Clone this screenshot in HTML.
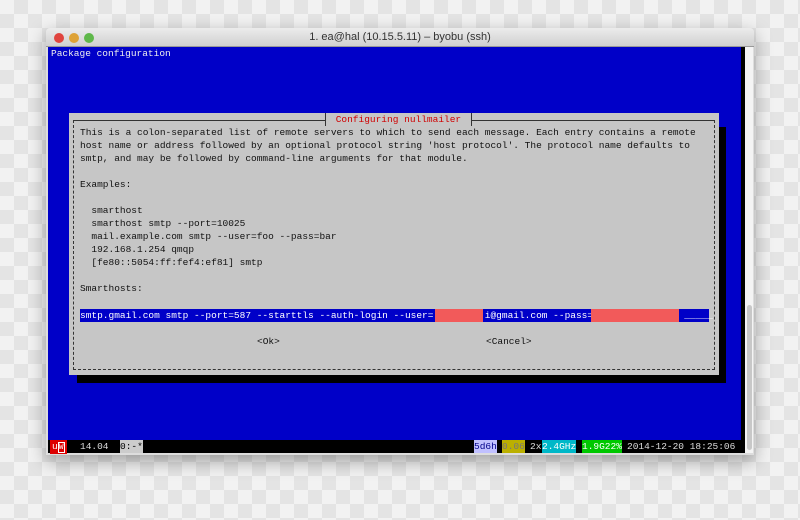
<!DOCTYPE html>
<html><head><meta charset="utf-8"><style>
*{margin:0;padding:0;box-sizing:border-box}
body{width:800px;height:520px;overflow:hidden;position:relative;
background-color:#f2f2f2;
background-image:linear-gradient(45deg,#e4e4e4 25%,transparent 25%,transparent 75%,#e4e4e4 75%),linear-gradient(45deg,#e4e4e4 25%,transparent 25%,transparent 75%,#e4e4e4 75%);
background-size:28px 28px;background-position:0 0,14px 14px;}
.win{position:absolute;left:46px;top:28px;width:708px;height:427px;background:#ddd;box-shadow:0 6px 18px rgba(0,0,0,.35);border-radius:4px 4px 0 0}
.title{position:absolute;left:0;top:0;width:708px;height:19px;background:linear-gradient(#ececec,#d0d0d0);border-radius:4px 4px 0 0;border-bottom:1px solid #999;font:11px "Liberation Sans",sans-serif;color:#333;text-align:center;line-height:19px}
.dot{position:absolute;top:5px;width:10px;height:10px;border-radius:50%}
.term{position:absolute;left:48px;top:47px;width:693px;height:393px;background:#0000c8}
.blk{position:absolute;left:741px;top:47px;width:4px;height:406px;background:#000}
.sb{position:absolute;left:745px;top:47px;width:8px;height:406px;background:#f4f4f4}
.sbt{position:absolute;left:747px;top:305px;width:5px;height:145px;background:#c8c8c8;border-radius:3px}
.status{position:absolute;left:48px;top:440px;width:693px;height:13px;background:#000}
.m{font-family:"Liberation Mono",monospace;font-size:9.5px;white-space:pre;position:absolute;line-height:13px}
.dlg{position:absolute;left:69px;top:113px;width:650px;height:262px;background:#c6c6c6}
.sh{position:absolute;left:77px;top:127px;width:649px;height:256px;background:#000}
.bx{position:absolute;left:73px;top:120px;width:642px;height:250px;border:1px dashed #333;border-top:1px solid #333}
.t{color:#111}
.s{color:#fff}
</style></head><body>
<div class="win">
<div class="title">1. ea@hal (10.15.5.11) – byobu (ssh)</div>
<div class="dot" style="left:8px;background:#e0443e"></div>
<div class="dot" style="left:23px;background:#dea236"></div>
<div class="dot" style="left:38px;background:#5fb84a"></div>
</div>
<div class="term"></div>
<div class="blk"></div><div class="sb"></div><div class="sbt"></div>
<div class="m s" style="left:51px;top:47px;color:#eee">Package configuration</div>
<div class="sh"></div>
<div class="dlg"></div>
<div class="bx"></div>
<div class="m" style="left:325px;top:113px;background:#c6c6c6;color:#d00000;padding:0 4px;border-left:1px solid #333;border-right:1px solid #333"> Configuring nullmailer </div>
<div class="m t" style="left:80px;top:126px">This is a colon-separated list of remote servers to which to send each message. Each entry contains a remote
host name or address followed by an optional protocol string 'host protocol'. The protocol name defaults to
smtp, and may be followed by command-line arguments for that module.

Examples:

  smarthost
  smarthost smtp --port=10025
  mail.example.com smtp --user=foo --pass=bar
  192.168.1.254 qmqp
  [fe80::5054:ff:fef4:ef81] smtp

Smarthosts:</div>
<div style="position:absolute;left:80px;top:309px;width:629px;height:13px;background:#0000c8"></div>
<div class="m s" style="left:80px;top:309px">smtp.gmail.com smtp --port=587 --starttls --auth-login --user=         i@gmail.com --pass=                _____</div>
<div style="position:absolute;left:435px;top:309px;width:48px;height:13px;background:#f25a5a"></div>
<div style="position:absolute;left:591px;top:309px;width:88px;height:13px;background:#f25a5a"></div>
<div class="m t" style="left:257px;top:335px">&lt;Ok&gt;</div>
<div class="m t" style="left:486px;top:335px">&lt;Cancel&gt;</div>
<div class="status"></div>
<div class="m" style="left:50px;top:440px;background:#d00;color:#fff;padding:0 2px">u<span style="border:1px solid #fff;font-size:8px">W</span></div>
<div class="m" style="left:80px;top:440px;color:#ddd">14.04</div>
<div class="m" style="left:120px;top:440px;background:#ccc;color:#000">0:-*</div>
<div class="m" style="left:474px;top:440px;background:#c0c0ff;color:#00008b">5d6h</div>
<div class="m" style="left:502px;top:440px;background:#bbb000;color:#777">0.06</div>
<div class="m" style="left:530px;top:440px;color:#ddd">2x</div>
<div class="m" style="left:542px;top:440px;background:#00b8c8;color:#fff">2.4GHz</div>
<div class="m" style="left:582px;top:440px;background:#00c800;color:#fff">1.9G22%</div>
<div class="m" style="left:627px;top:440px;color:#ddd">2014-12-20 18:25:06</div>
</body></html>
